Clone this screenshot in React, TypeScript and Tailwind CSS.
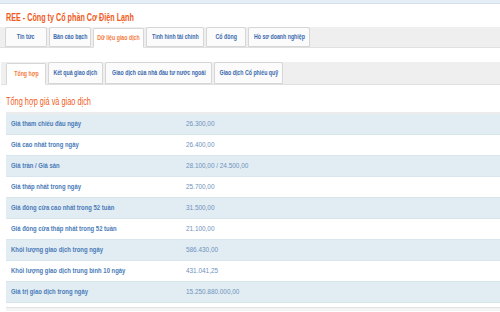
import React from "react"

const font = { fontFamily: "'Liberation Sans', Arial, sans-serif" }

const topTabs = [
  { label: "Tin tức", w: "w-[42px]" },
  { label: "Bản cáo bạch", w: "w-[42px]" },
  { label: "Dữ liệu giao dịch", w: "w-[51px]", active: true },
  { label: "Tình hình tài chính", w: "w-[58px]" },
  { label: "Cổ đông", w: "w-[40px]" },
  { label: "Hồ sơ doanh nghiệp", w: "w-[62px]" },
]

const subTabs = [
  { label: "Tổng hợp", w: "w-[40px]", active: true },
  { label: "Kết quả giao dịch", w: "w-[55px]" },
  { label: "Giao dịch của nhà đầu tư nước ngoài", w: "w-[107px]" },
  { label: "Giao dịch Cổ phiếu quỹ", w: "w-[69px]" },
]

const rows = [
  ["Giá tham chiếu đầu ngày", "26.300,00"],
  ["Giá cao nhất trong ngày", "26.400,00"],
  ["Giá trần / Giá sàn", "28.100,00 / 24.500,00"],
  ["Giá thấp nhất trong ngày", "25.700,00"],
  ["Giá đóng cửa cao nhất trong 52 tuần", "31.500,00"],
  ["Giá đóng cửa thấp nhất trong 52 tuần", "21.100,00"],
  ["Khối lượng giao dịch trong ngày", "586.430,00"],
  ["Khối lượng giao dịch trung bình 10 ngày", "431.041,25"],
  ["Giá trị giao dịch trong ngày", "15.250.880.000,00"],
]

function TabBar({ tabs, height }: { tabs: { label: string; w: string; active?: boolean }[]; height: string }) {
  return (
    <div className={`${height} bg-[#efefef] border-b border-[#e0e0e0] flex items-end gap-[2px] pl-[5px]`}>
      {tabs.map((t) => (
        <div
          key={t.label}
          className={`${t.w} h-full flex items-center justify-center border border-[#d6d6d6] rounded-t-[2px] text-[7.5px] font-bold whitespace-nowrap ${
            t.active
              ? "bg-white border-b-white text-[#f47a3c] -mb-px"
              : "bg-[#fbfbfb] text-[#3a69ad] mt-px"
          }`}
        >
          <span className="inline-block scale-x-[0.7]">{t.label}</span>
        </div>
      ))}
    </div>
  )
}

export default function App() {
  return (
    <div className="w-[500px] h-[312px] overflow-hidden bg-white" style={font}>
      <div className="h-[4px] bg-[#e5eef6] border-b border-[#d5e2ec]" />
      <div className="pl-[6px] pt-[8px] h-[23px] text-[10px] font-bold text-[#f05a1a] leading-[11px] whitespace-nowrap">
        <span className="inline-block origin-left scale-x-[0.72]">REE - Công ty Cổ phần Cơ Điện Lạnh</span>
      </div>
      <TabBar tabs={topTabs} height="h-[21px]" />
      <div className="h-[14px]" />
      <div className="pl-px">
        <TabBar tabs={subTabs} height="h-[23px]" />
      </div>
      <div className="pl-[6px] pt-[11px] h-[27px] text-[10.5px] text-[#f05a1a] leading-[11px] whitespace-nowrap">
        <span className="inline-block origin-left scale-x-[0.7]">Tổng hợp giá và giao dịch</span>
      </div>
      <div className="ml-[6px] border-t-2 border-[#ececec]">
        {rows.map(([label, value], i) => (
          <div
            key={label}
            className={`h-[21px] flex items-center text-[8px] whitespace-nowrap border-b border-[#d9e5ee] ${
              i % 2 === 0 ? "bg-[#e2ecf3]" : "bg-white"
            }`}
          >
            <div className="w-[180px] pl-[5px] font-bold text-[#4a7bb8]">
              <span className="inline-block origin-left scale-x-[0.74]">{label}</span>
            </div>
            <div className="text-[#6d93bd]">
              <span className="inline-block origin-left scale-x-[0.8]">{value}</span>
            </div>
          </div>
        ))}
      </div>
      <div className="mt-[4px] ml-[6px] h-[4px] border-t border-[#e2e2e2] bg-[#f4f4f4]" />
    </div>
  )
}
